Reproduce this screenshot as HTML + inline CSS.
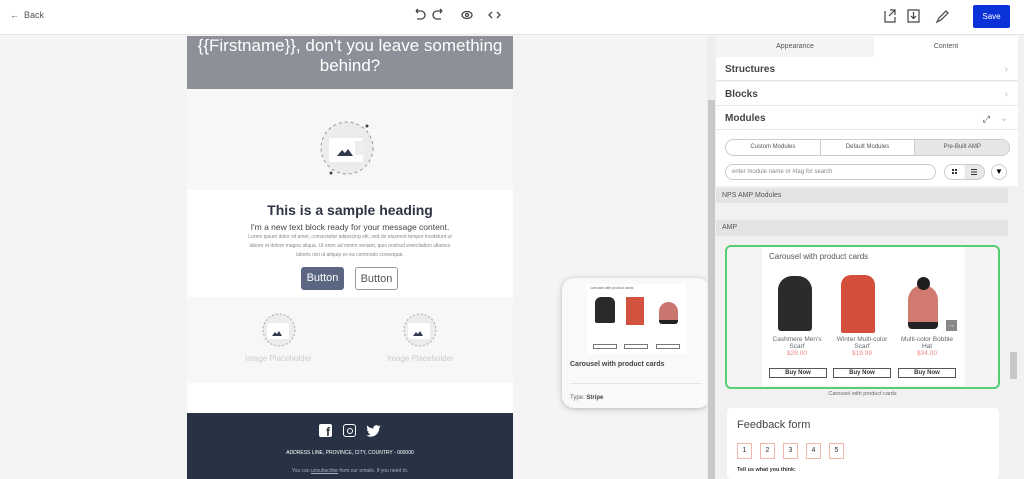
<!DOCTYPE html>
<html><head><meta charset="utf-8"><style>
*{margin:0;padding:0;box-sizing:border-box}
body{width:1024px;height:479px;overflow:hidden;background:#f4f4f4;font-family:"Liberation Sans",sans-serif;position:relative}
.a{position:absolute}
.top{left:0;top:0;width:1024px;height:35px;background:#fff;border-bottom:1px solid #e6e6e6}
.btnp{border-radius:3px;font-size:11px;text-align:center;line-height:22px;width:43px;height:23px}
.row{left:716px;width:302px;background:#fff;border-bottom:1px solid #e6e6e6;height:24px;font-size:10px;font-weight:bold;color:#444;padding-left:9px;line-height:26px}
.chev{position:absolute;right:10px;top:0;color:#bbb;font-weight:normal}
.prod{width:58px;text-align:center;font-size:6.5px;color:#666}
.buy{border:1px solid #555;height:10px;font-size:6px;font-weight:bold;line-height:8px;text-align:center;color:#333;width:58px}
.num{width:15px;height:16px;border:1px solid #f0b8a8;font-size:7px;text-align:center;line-height:14px;color:#333}
</style></head><body>
<div class="a top"></div>
<div class="a" style="left:10px;top:10px;font-size:9px;color:#555">&#8592;&nbsp; Back</div>
<svg class="a" style="left:412px;top:8px" width="90" height="14" viewBox="0 0 90 14" fill="none" stroke="#444" stroke-width="1.3"><path d="M4 3H9A4 4 0 0 1 9 11H5M4 3L6 1M4 3L6 5"/><path d="M30 3H25A4 4 0 0 0 25 11H29M30 3L28 1M30 3L28 5"/><ellipse cx="55" cy="7" rx="5" ry="3.5"/><circle cx="55" cy="7" r="1.5"/><path d="M80 4L77 7L80 10M85 4L88 7L85 10"/></svg>
<svg class="a" style="left:884px;top:8px" width="66" height="16" viewBox="0 0 66 16" fill="none" stroke="#444" stroke-width="1.2"><path d="M1 3V14H11V9M6 2H11V7M11 2L5 8"/><path d="M24 2H35V14H24ZM29.5 4V10M27 8L29.5 10.5L32 8"/><path d="M53 14L55 10L62 3L64 5L57 12Z"/></svg>
<div class="a" style="left:973px;top:5px;width:37px;height:23px;background:#0b32d9;border-radius:2px;color:#fff;font-size:8px;text-align:center;line-height:23px">Save</div>

<div class="a" style="left:187px;top:36px;width:326px;height:53px;background:#8e9099;color:#fff;font-size:17px;text-align:center;line-height:20px;padding-top:0">{{Firstname}}, don't you leave something behind?</div>
<div class="a" style="left:187px;top:89px;width:326px;height:101px;background:#f7f7f8"></div>
<svg class="a" style="left:305px;top:118px" width="80" height="66" viewBox="0 0 80 66"><circle cx="42" cy="30" r="26" fill="#ececec" stroke="#999" stroke-dasharray="3 3"/><rect x="24" y="20" width="34" height="24" rx="2" fill="#fff"/><rect x="50" y="23" width="10" height="14" fill="#eee"/><path d="M32 38L37 32L40 35L43 31L48 38Z" fill="#2f3a4d"/><circle cx="62" cy="8" r="1.5" fill="#444"/><circle cx="26" cy="55" r="1.5" fill="#444"/></svg>
<div class="a" style="left:187px;top:190px;width:326px;height:107px;background:#fff"></div>
<div class="a" style="left:187px;top:202px;width:326px;text-align:center;font-size:14px;font-weight:bold;color:#2e3444">This is a sample heading</div>
<div class="a" style="left:187px;top:222px;width:326px;text-align:center;font-size:8.5px;color:#444">I'm a new text block ready for your message content.</div>
<div class="a" style="left:245px;top:233px;width:210px;text-align:center;font-size:5px;line-height:9px;color:#888">Lorem ipsum dolor sit amet, consectetur adipiscing elit, sed do eiusmod tempor incididunt ut labore et dolore magna aliqua. Ut enim ad minim veniam, quis nostrud exercitation ullamco laboris nisi ut aliquip ex ea commodo consequat.</div>
<div class="a btnp" style="left:301px;top:267px;background:#5a6682;color:#fff">Button</div>
<div class="a btnp" style="left:355px;top:267px;border:1px solid #999;color:#555">Button</div>
<div class="a" style="left:187px;top:297px;width:326px;height:86px;background:#f7f7f8"></div>
<svg class="a" style="left:253px;top:311px" width="50" height="38" viewBox="0 0 50 38"><circle cx="26" cy="19" r="16" fill="#ececec" stroke="#aaa" stroke-dasharray="2 2"/><rect x="14" y="12" width="22" height="16" rx="2" fill="#fff"/><path d="M19 25L22 21L24 23L26 20L29 25Z" fill="#2f3a4d"/></svg>
<svg class="a" style="left:394px;top:311px" width="50" height="38" viewBox="0 0 50 38"><circle cx="26" cy="19" r="16" fill="#ececec" stroke="#aaa" stroke-dasharray="2 2"/><rect x="14" y="12" width="22" height="16" rx="2" fill="#fff"/><path d="M19 25L22 21L24 23L26 20L29 25Z" fill="#2f3a4d"/></svg>
<div class="a" style="left:245px;top:354px;font-size:8px;color:#ccc">Image Placeholder</div>
<div class="a" style="left:387px;top:354px;font-size:8px;color:#ccc">Image Placeholder</div>
<div class="a" style="left:187px;top:383px;width:326px;height:30px;background:#fff"></div>
<div class="a" style="left:187px;top:413px;width:326px;height:66px;background:#283245"></div>
<div class="a" style="left:319px;top:424px;width:13px;height:13px;background:#fff;border-radius:2px;color:#283245;font-size:12px;font-weight:bold;text-align:right;line-height:16px;padding-right:2px">f</div>
<div class="a" style="left:343px;top:424px;width:13px;height:13px;border:1.5px solid #fff;border-radius:3px"></div>
<div class="a" style="left:346.5px;top:427.5px;width:6px;height:6px;border:1.3px solid #fff;border-radius:50%"></div>
<svg class="a" style="left:366px;top:425px" width="15" height="12" viewBox="0 0 24 20"><path d="M24 2.4a10 10 0 0 1-2.8.8A5 5 0 0 0 23.3.4a10 10 0 0 1-3.1 1.2A5 5 0 0 0 11.8 6 14 14 0 0 1 1.7.9a5 5 0 0 0 1.5 6.6A5 5 0 0 1 1 6.9a5 5 0 0 0 3.9 4.8 5 5 0 0 1-2.2.1 5 5 0 0 0 4.6 3.4A10 10 0 0 1 0 17.3 14 14 0 0 0 7.5 19.5c9 0 14-7.5 14-14v-.6A10 10 0 0 0 24 2.4z" fill="#fff"/></svg>
<div class="a" style="left:187px;top:450px;width:326px;text-align:center;font-size:5px;color:#fff">ADDRESS LINE, PROVINCE, CITY, COUNTRY - 000000</div>
<div class="a" style="left:187px;top:468px;width:326px;text-align:center;font-size:5px;color:#aab">You can <u>unsubscribe</u> from our emails. If you need to.</div>

<div class="a" style="left:562px;top:278px;width:148px;height:130px;background:#f9f9f9;border-radius:12px;box-shadow:0 1px 6px rgba(0,0,0,.25)"></div>
<div class="a" style="left:587px;top:284px;width:99px;height:70px;background:#fff"></div>
<div class="a" style="left:590px;top:286px;font-size:3.5px;color:#666">Carousel with product cards</div>
<div class="a" style="left:595px;top:297px;width:20px;height:26px;background:#2a2a2a;border-radius:6px 6px 2px 2px"></div>
<div class="a" style="left:626px;top:297px;width:18px;height:28px;background:#d2523f"></div>
<div class="a" style="left:659px;top:302px;width:19px;height:22px;background:#c9766e;border-radius:10px 10px 3px 3px;border-bottom:4px solid #222"></div>
<div class="a" style="left:593px;top:344px;width:24px;height:5px;border:1px solid #777"></div>
<div class="a" style="left:624px;top:344px;width:24px;height:5px;border:1px solid #777"></div>
<div class="a" style="left:656px;top:344px;width:24px;height:5px;border:1px solid #777"></div>
<div class="a" style="left:570px;top:361px;font-size:7px;font-weight:bold;color:#444">Carousel with product cards</div>
<div class="a" style="left:570px;top:383px;width:132px;border-top:1px solid #e4e4e4"></div>
<div class="a" style="left:570px;top:395px;font-size:6px;color:#666">Type: <b style="color:#444">Stripe</b></div>

<div class="a" style="left:707px;top:36px;width:9px;height:443px;background:#eee"></div>
<div class="a" style="left:708px;top:100px;width:7px;height:379px;background:#c8c8c8"></div>

<div class="a" style="left:716px;top:36px;width:308px;height:443px;background:#f1f1f1"></div>
<div class="a" style="left:716px;top:36px;width:158px;height:21px;background:#f4f4f4;font-size:7px;color:#555;text-align:center;line-height:21px">Appearance</div>
<div class="a" style="left:874px;top:36px;width:144px;height:21px;background:#fff;font-size:7px;color:#555;text-align:center;line-height:21px">Content</div>
<div class="a row" style="top:57px">Structures<span class="chev">&#8250;</span></div>
<div class="a row" style="top:82px">Blocks<span class="chev">&#8250;</span></div>
<div class="a row" style="top:106px">Modules<span class="chev">&#8964;</span><span class="chev" style="right:28px;color:#444;font-size:9px">&#10530;</span></div>
<div class="a" style="left:716px;top:130px;width:302px;height:56px;background:#fff"></div>
<div class="a" style="left:725px;top:139px;width:285px;height:17px;border:1px solid #ccc;border-radius:9px;overflow:hidden;display:flex;font-size:6px;color:#555">
<div style="flex:1;text-align:center;line-height:15px;border-right:1px solid #ccc">Custom Modules</div><div style="flex:1;text-align:center;line-height:15px;border-right:1px solid #ccc">Default Modules</div><div style="flex:1;text-align:center;line-height:15px;background:#e6e6e6">Pre-Built AMP</div></div>
<div class="a" style="left:725px;top:164px;width:211px;height:16px;border:1px solid #ccc;border-radius:8px;font-size:6px;color:#888;line-height:14px;padding-left:6px">enter module name or #tag for search</div>
<div class="a" style="left:944px;top:164px;width:41px;height:16px;border:1px solid #ccc;border-radius:8px;background:linear-gradient(90deg,#fff 50%,#e8e8e8 50%)"></div>
<svg class="a" style="left:944px;top:164px" width="41" height="16" viewBox="0 0 41 16" fill="#333"><rect x="8" y="5" width="2" height="2"/><rect x="11" y="5" width="2" height="2"/><rect x="8" y="8" width="2" height="2"/><rect x="11" y="8" width="2" height="2"/><rect x="27" y="5" width="6" height="1"/><rect x="27" y="7.5" width="6" height="1"/><rect x="27" y="10" width="6" height="1"/></svg>
<div class="a" style="left:991px;top:164px;width:16px;height:16px;border:1px solid #ccc;border-radius:50%;font-size:8px;text-align:center;line-height:14px">&#9660;</div>
<div class="a" style="left:716px;top:188px;width:292px;height:15px;background:#e4e4e4;font-size:7px;color:#555;padding-left:6px;line-height:15px">NPS AMP Modules</div>
<div class="a" style="left:716px;top:220px;width:292px;height:16px;background:#e4e4e4;font-size:7px;color:#555;padding-left:6px;line-height:16px">AMP</div>
<div class="a" style="left:1010px;top:352px;width:7px;height:27px;background:#c8c8c8"></div>
<div class="a" style="left:725px;top:245px;width:275px;height:144px;border:2px solid #56cf74;border-radius:6px;background:#f4f4f4"></div>
<div class="a" style="left:762px;top:247px;width:203px;height:139px;background:#fff"></div>
<div class="a" style="left:769px;top:252px;font-size:8px;color:#555">Carousel with product cards</div>
<div class="a" style="left:778px;top:276px;width:34px;height:55px;background:#2b2b2b;border-radius:14px 14px 3px 3px"></div>
<div class="a" style="left:841px;top:275px;width:34px;height:58px;background:#d44e3c;border-radius:10px 10px 2px 2px"></div>
<div class="a" style="left:908px;top:285px;width:30px;height:44px;background:#d17a70;border-radius:15px 15px 4px 4px;border-bottom:7px solid #222"></div>
<div class="a" style="left:917px;top:277px;width:13px;height:13px;background:#1e1e1e;border-radius:50%"></div>
<div class="a" style="left:946px;top:320px;width:11px;height:11px;background:#888;color:#fff;font-size:7px;text-align:center;line-height:11px">&#8594;</div>
<div class="a prod" style="left:768px;top:336px">Cashmere Men's Scarf<br><span style="color:#e88">$29.00</span></div>
<div class="a prod" style="left:833px;top:336px">Winter Multi-color Scarf<br><span style="color:#e88">$19.99</span></div>
<div class="a prod" style="left:898px;top:336px">Multi-color Bobble Hat<br><span style="color:#e88">$34.00</span></div>
<div class="a buy" style="left:769px;top:368px">Buy Now</div>
<div class="a buy" style="left:833px;top:368px">Buy Now</div>
<div class="a buy" style="left:898px;top:368px">Buy Now</div>
<div class="a" style="left:725px;top:391px;width:275px;text-align:center;font-size:5.5px;color:#666">Carousel with product cards</div>
<div class="a" style="left:727px;top:408px;width:272px;height:71px;background:#fff;border-radius:4px"></div>
<div class="a" style="left:737px;top:419px;font-size:11px;color:#444">Feedback form</div>
<div class="a num" style="left:737px;top:443px">1</div>
<div class="a num" style="left:760px;top:443px">2</div>
<div class="a num" style="left:783px;top:443px">3</div>
<div class="a num" style="left:806px;top:443px">4</div>
<div class="a num" style="left:829px;top:443px">5</div>
<div class="a" style="left:737px;top:467px;font-size:5.5px;color:#333;font-weight:bold">Tell us what you think:</div>
</body></html>
